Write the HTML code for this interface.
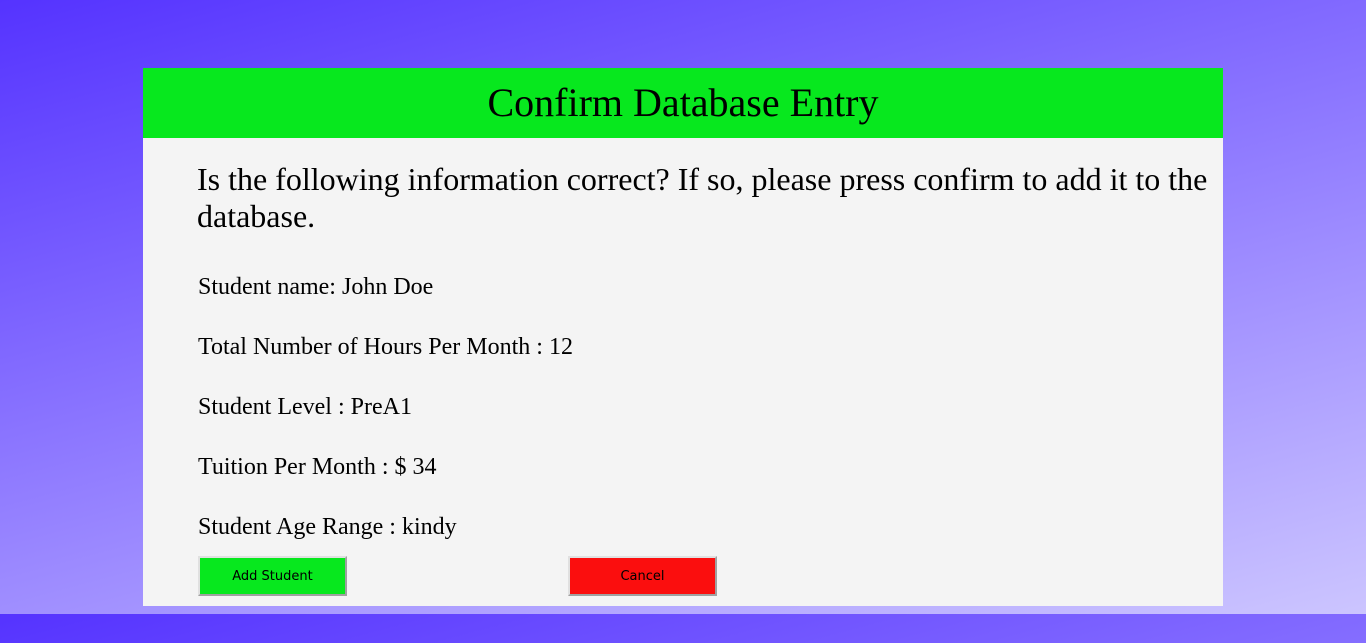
<!DOCTYPE html>
<html><head><meta charset="utf-8"><style>
html,body{margin:0;padding:0;width:1366px;height:643px;overflow:hidden}
body{background:linear-gradient(165deg,#5533ff 0%,#ccc5ff 100%) 0 0/1366px 614px repeat;position:relative;font-family:"Liberation Serif",serif}
.panel{position:absolute;left:143px;top:68px;width:1080px;height:538px;background:#f4f4f4}
.hdr{height:70px;background:#07e81e;text-align:center;font-size:40px;line-height:70px;color:#000}
.q{position:absolute;left:54px;top:93px;width:1026px;font-size:32px;line-height:37px;white-space:nowrap}
.it{position:absolute;left:55px;font-size:24px;line-height:26px}
.btn{position:absolute;top:488px;width:145px;height:36px;border:2px solid;border-color:#e0e0e0 #a0a0a0 #a0a0a0 #e0e0e0;font-family:"DejaVu Sans",sans-serif;font-size:13px;text-align:center;line-height:38px;color:#000}
</style></head><body>
<div class="panel">
<div class="hdr">Confirm Database Entry</div>
<div class="q">Is the following information correct? If so, please press confirm to add it to the<br>database.</div>
<div class="it" style="top:206px">Student name: John Doe</div>
<div class="it" style="top:266px">Total Number of Hours Per Month : 12</div>
<div class="it" style="top:326px">Student Level : PreA1</div>
<div class="it" style="top:386px">Tuition Per Month : $ 34</div>
<div class="it" style="top:446px">Student Age Range : kindy</div>
<div class="btn" style="left:55px;background:#07e81e">Add Student</div>
<div class="btn" style="left:425px;background:#fb0e0e">Cancel</div>
</div>
</body></html>
